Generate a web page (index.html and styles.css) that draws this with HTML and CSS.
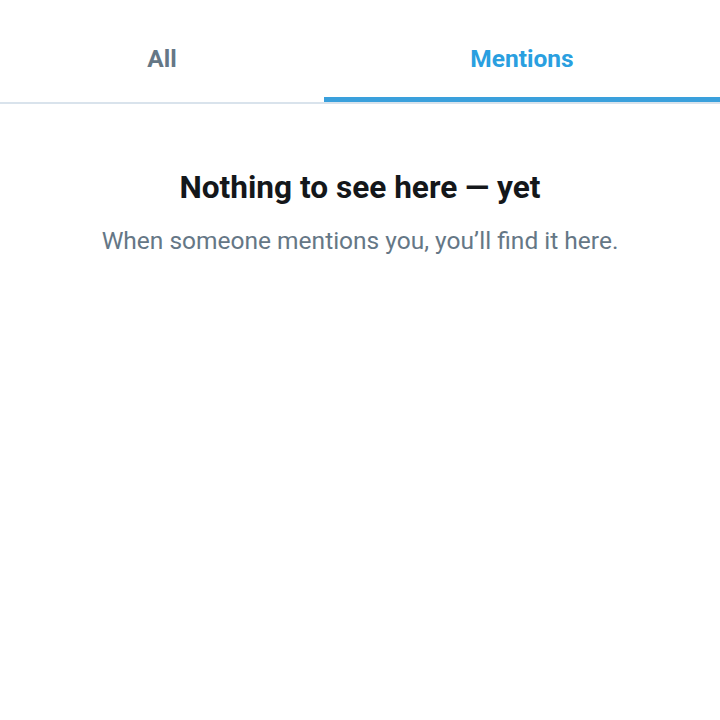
FILE: index.html
```html
<!DOCTYPE html>
<html>
<head>
<meta charset="utf-8">
<link rel="stylesheet" href="styles.css">
</head>
<body>
<div class="tabs">
  <div class="tab">All</div>
  <div class="tab active">Mentions</div>
</div>
<div class="empty">
  <h1 class="title">Nothing to see here — yet</h1>
  <p class="sub">When someone mentions you, you’ll find it here.</p>
</div>
</body>
</html>
```
FILE: styles.css
```css
html, body {
  margin: 0;
  padding: 0;
  background: #fff;
  font-family: Roboto, "Noto Sans", sans-serif;
}
.tabs {
  display: grid;
  grid-template-columns: 324px 1fr;
  height: 104px;
  border-bottom: 2px solid #d9e3ec;
  box-sizing: border-box;
}
.tab {
  display: flex;
  align-items: center;
  justify-content: center;
  padding-top: 14px;
  font-size: 24.5px;
  font-weight: 700;
  color: #657786;
  box-sizing: border-box;
}
.tab.active {
  color: #2a9fe0;
  border-bottom: 5px solid #3aa0dc;
  padding-top: 19px;
}
.empty {
  text-align: center;
  padding-top: 65px;
}
.title {
  margin: 0;
  font-size: 31.6px;
  font-weight: 700;
  color: #14171a;
  line-height: 38px;
}
.sub {
  margin: 19px 0 0;
  font-size: 24.5px;
  color: #657786;
  line-height: 30px;
}
```
